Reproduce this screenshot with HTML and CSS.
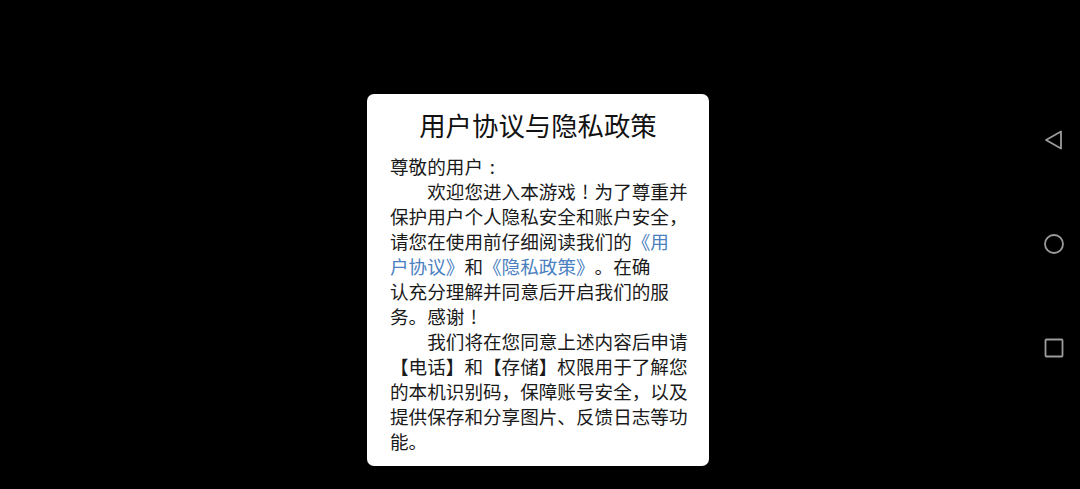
FILE: index.html
```html
<!DOCTYPE html>
<html lang="zh-CN">
<head>
<meta charset="utf-8">
<link rel="stylesheet" href="styles.css">
</head>
<body>
<div class="stage">
  <div class="dialog">
    <h1 class="title">用户协议与隐私政策</h1>
    <div class="content">
      <div>尊敬的用户<span class="pc">:</span></div>
      <div><span class="indent"></span>欢迎您进入本游戏<span class="pc">!</span>为了尊重并</div>
      <div>保护用户个人隐私安全和账户安全，</div>
      <div>请您在使用前仔细阅读我们的<span class="link">《用</span></div>
      <div><span class="link">户协议》</span>和<span class="link">《隐私政策》</span>。在确</div>
      <div>认充分理解并同意后开启我们的服</div>
      <div>务。感谢<span class="pc">!</span></div>
      <div><span class="indent"></span>我们将在您同意上述内容后申请</div>
      <div>【电话】和【存储】权限用于了解您</div>
      <div>的本机识别码，保障账号安全，以及</div>
      <div>提供保存和分享图片、反馈日志等功</div>
      <div>能。</div>
    </div>
  </div>
</div>
<nav class="nav">
  <svg class="navicon" viewBox="0 0 20 20"><polygon points="2,10 17,1.5 17,18.5" fill="none" stroke="#9c9c9c" stroke-width="1.8" stroke-linejoin="round"/></svg>
  <svg class="navicon" viewBox="0 0 20 20"><circle cx="10" cy="10" r="9" fill="none" stroke="#9c9c9c" stroke-width="1.8"/></svg>
  <svg class="navicon" viewBox="0 0 20 20"><rect x="1.5" y="1.5" width="17" height="17" rx="1" fill="none" stroke="#9c9c9c" stroke-width="1.8"/></svg>
</nav>
</body>
</html>
```
FILE: styles.css
```css
html, body {
  margin: 0;
  padding: 0;
  background: #000;
  height: 100%;
}
body {
  display: flex;
  font-family: "Noto Sans CJK SC", "Noto Sans", sans-serif;
}
.stage {
  flex: 1;
  padding: 94px 0 0 367px;
}
.dialog {
  width: 342px;
  height: 372px;
  box-sizing: border-box;
  background: #fff;
  border-radius: 7px;
  padding: 0 20px 0 23px;
}
.title {
  margin: 0;
  padding-top: 13px;
  height: 36px;
  line-height: 36px;
  font-size: 26.4px;
  font-weight: 400;
  color: #111;
  text-align: center;
  padding-right: 3px;
}
.content {
  margin-top: 10px;
  font-size: 18.6px;
  line-height: 25px;
  color: #1a1a1a;
  white-space: nowrap;
  text-spacing-trim: space-all;
  font-kerning: none;
}
.pc {
  display: inline-block;
  width: 1em;
  text-align: center;
}
.indent {
  display: inline-block;
  width: 2em;
}
.link {
  color: #4a80c0;
}
.nav {
  width: 52px;
  display: flex;
  flex-direction: column;
  align-items: center;
  padding-top: 130px;
  gap: 84px;
}
.navicon {
  width: 20px;
  height: 20px;
  display: block;
}
```
